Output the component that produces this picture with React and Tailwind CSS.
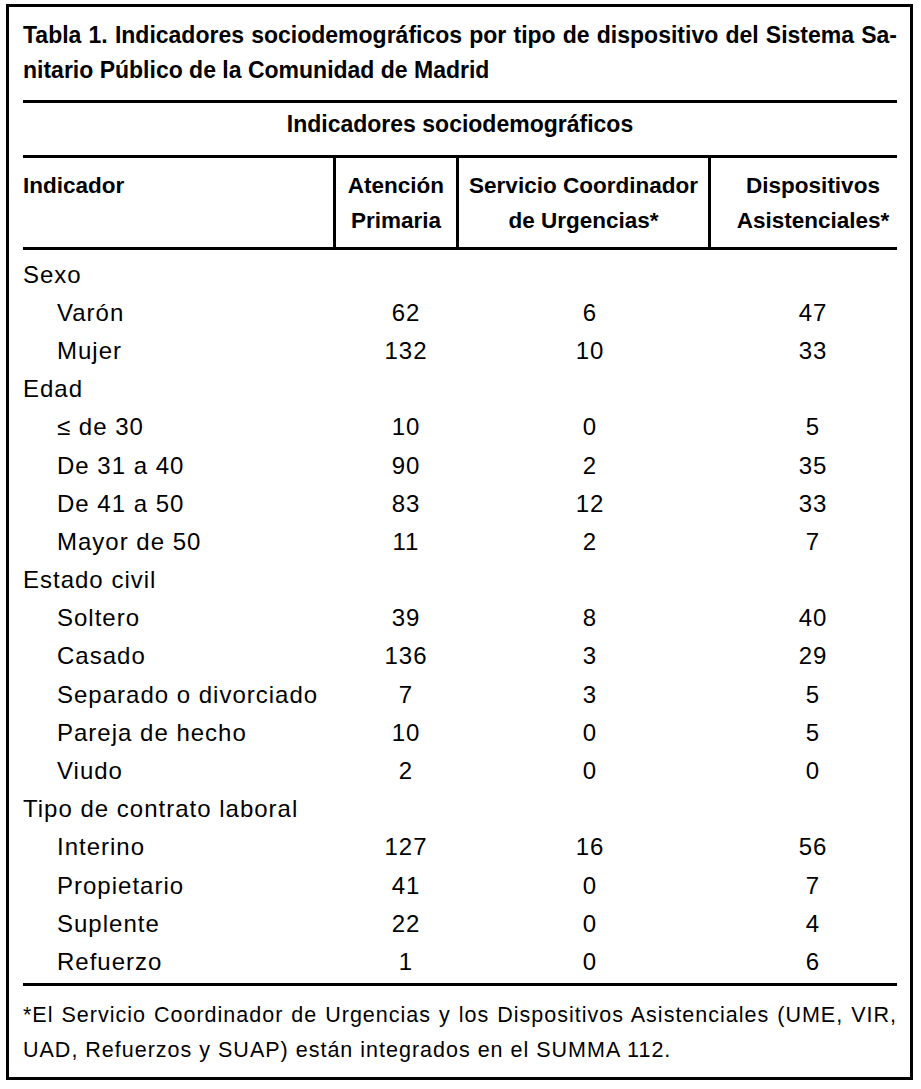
import React from "react";

const rows = [
  { l: "Sexo" },
  { l: "Varón", v: ["62", "6", "47"] },
  { l: "Mujer", v: ["132", "10", "33"] },
  { l: "Edad" },
  { l: "≤ de 30", v: ["10", "0", "5"] },
  { l: "De 31 a 40", v: ["90", "2", "35"] },
  { l: "De 41 a 50", v: ["83", "12", "33"] },
  { l: "Mayor de 50", v: ["11", "2", "7"] },
  { l: "Estado civil" },
  { l: "Soltero", v: ["39", "8", "40"] },
  { l: "Casado", v: ["136", "3", "29"] },
  { l: "Separado o divorciado", v: ["7", "3", "5"] },
  { l: "Pareja de hecho", v: ["10", "0", "5"] },
  { l: "Viudo", v: ["2", "0", "0"] },
  { l: "Tipo de contrato laboral" },
  { l: "Interino", v: ["127", "16", "56"] },
  { l: "Propietario", v: ["41", "0", "7"] },
  { l: "Suplente", v: ["22", "0", "4"] },
  { l: "Refuerzo", v: ["1", "0", "6"] },
];

export default function App() {
  return (
    <div className="min-h-[1089px] bg-white pt-[4px] pl-[6px] font-['Liberation_Sans',Arial,sans-serif] text-black">
      <div className="w-[907px] h-[1076px] border-[3px] border-black pl-[14px] pr-[13px] pt-[11px]">
        {/* Title */}
        <div className="pb-[12px] border-b-[3px] border-black text-[23px] leading-[35px] font-bold">
          <div className="[text-align-last:justify] text-justify whitespace-nowrap">
            Tabla 1. Indicadores sociodemográficos por tipo de dispositivo del Sistema Sa-
          </div>
          <div>nitario Público de la Comunidad de Madrid</div>
        </div>
        {/* Subheader */}
        <div className="pt-[4px] pb-[13px] text-center text-[23px] leading-[35px] font-bold">
          Indicadores sociodemográficos
        </div>
        {/* Header */}
        <div className="grid grid-cols-[313px_123px_252px_186px] border-t-[3px] border-b-[3px] border-black text-[22.5px] leading-[35px] font-bold">
          <div className="border-r-[3px] border-black py-[9.5px]">Indicador</div>
          <div className="border-r-[3px] border-black py-[9.5px] text-center">
            <div>Atención</div>
            <div>Primaria</div>
          </div>
          <div className="border-r-[3px] border-black py-[9.5px] text-center">
            <div>Servicio Coordinador</div>
            <div>de Urgencias*</div>
          </div>
          <div className="py-[9.5px] pl-[18px] text-center">
            <div>Dispositivos</div>
            <div>Asistenciales*</div>
          </div>
        </div>
        {/* Body */}
        <div className="pt-[5.6px] pb-[1.6px] text-[24px] leading-[38.2px] tracking-[1px]">
          {rows.map((r, i) => (
            <div key={i} className="grid grid-cols-[313px_123px_252px_186px] h-[38.2px]">
              <div className={r.v ? "pl-[34px] whitespace-nowrap" : "whitespace-nowrap"}>{r.l}</div>
              <div className="pl-[17px] text-center">{r.v ? r.v[0] : ""}</div>
              <div className="pl-[10px] text-center">{r.v ? r.v[1] : ""}</div>
              <div className="pl-[18px] text-center">{r.v ? r.v[2] : ""}</div>
            </div>
          ))}
        </div>
        {/* Footer */}
        <div className="border-t-[3px] border-black pt-[12.7px] text-[21.5px] leading-[35px] tracking-[1px]">
          <div className="[text-align-last:justify] text-justify whitespace-nowrap">
            *El Servicio Coordinador de Urgencias y los Dispositivos Asistenciales (UME, VIR,
          </div>
          <div className="whitespace-nowrap">UAD, Refuerzos y SUAP) están integrados en el SUMMA 112.</div>
        </div>
      </div>
    </div>
  );
}
